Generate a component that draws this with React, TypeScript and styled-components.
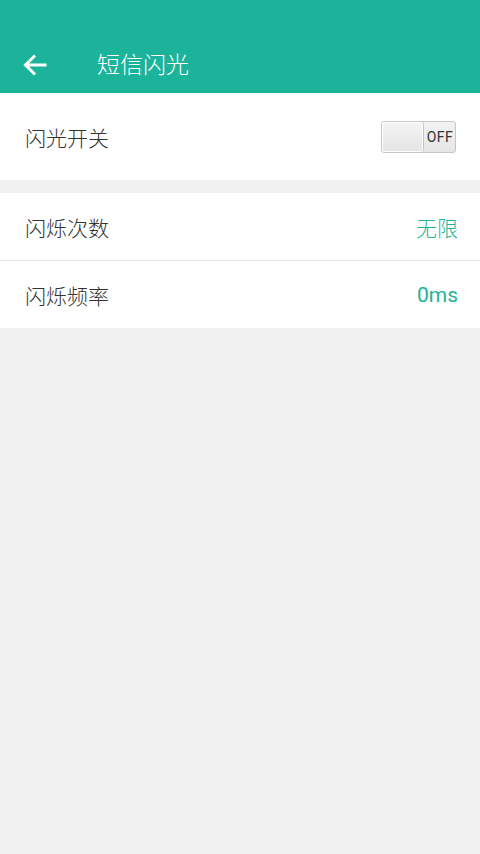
import React from "react";
import styled, { createGlobalStyle } from "styled-components";

const Global = createGlobalStyle`
  html, body { margin: 0; padding: 0; background: #f0f0f0; }
  body { font-family: Roboto, "Noto Sans CJK SC", sans-serif; }
`;

const Page = styled.div`
  width: 480px;
  min-height: 854px;
  background: #f0f0f0;
  display: flex;
  flex-direction: column;
`;

const Header = styled.header`
  height: 93px;
  background: #1bb39a;
  display: flex;
  align-items: flex-end;
  box-sizing: border-box;
  padding: 0 0 12px 23px;
`;

const BackButton = styled.button`
  border: 0;
  background: transparent;
  padding: 0;
  width: 24px;
  height: 24px;
  display: flex;
  align-items: center;
  justify-content: center;
  margin-bottom: 4px;
`;

const Title = styled.h1`
  margin: 0 0 0 50px;
  font-size: 23px;
  font-weight: 300;
  color: #ffffff;
  line-height: 30px;
`;

const Group = styled.section<{ $gap?: number }>`
  background: #fff;
  margin-top: ${(p) => p.$gap ?? 0}px;
  display: flex;
  flex-direction: column;
`;

const Row = styled.div<{ $h: number; $divider?: boolean }>`
  height: ${(p) => p.$h}px;
  display: flex;
  align-items: center;
  justify-content: space-between;
  padding: 0 22px 0 25px;
  border-bottom: ${(p) => (p.$divider ? "1px solid #e6e6e6" : "none")};
`;

const Label = styled.span`
  font-size: 21px;
  font-weight: 300;
  color: #333333;
`;

const Value = styled.span<{ $latin?: boolean }>`
  font-size: 21px;
  font-weight: ${(p) => (p.$latin ? 400 : 300)};
  color: #1fb397;
`;

const Switch = styled.div`
  width: 75px;
  height: 32px;
  box-sizing: border-box;
  border: 1px solid #c6c6c6;
  border-radius: 3px;
  background: linear-gradient(#f2f2f2, #e6e6e6);
  display: flex;
  margin-right: 2px;
`;

const Thumb = styled.div`
  width: 42px;
  height: 100%;
  box-sizing: border-box;
  border-right: 1px solid #c4c4c4;
  border-radius: 3px;
  background: linear-gradient(#f4f4f4, #e4e4e4);
  box-shadow: inset 0 0 0 1px #ffffff;
`;

const SwitchText = styled.span`
  flex: 1;
  display: flex;
  align-items: center;
  justify-content: center;
  font-family: Roboto, "Liberation Sans", Arial, sans-serif;
  font-size: 14px;
  color: #333;
  letter-spacing: 0.5px;
  padding-left: 1px;
`;

export default function App() {
  return (
    <>
      <Global />
      <Page>
        <Header>
          <BackButton aria-label="back">
            <svg width="24" height="22" viewBox="0 0 24 22">
              <path
                d="M22 11H3M11 2.5L2.5 11L11 19.5"
                stroke="#fff"
                strokeWidth="3"
                fill="none"
                strokeLinecap="square"
              />
            </svg>
          </BackButton>
          <Title>短信闪光</Title>
        </Header>
        <Group>
          <Row $h={87}>
            <Label>闪光开关</Label>
            <Switch>
              <Thumb />
              <SwitchText>OFF</SwitchText>
            </Switch>
          </Row>
        </Group>
        <Group $gap={13}>
          <Row $h={67} $divider>
            <Label>闪烁次数</Label>
            <Value>无限</Value>
          </Row>
          <Row $h={67}>
            <Label>闪烁频率</Label>
            <Value $latin>0ms</Value>
          </Row>
        </Group>
      </Page>
    </>
  );
}
